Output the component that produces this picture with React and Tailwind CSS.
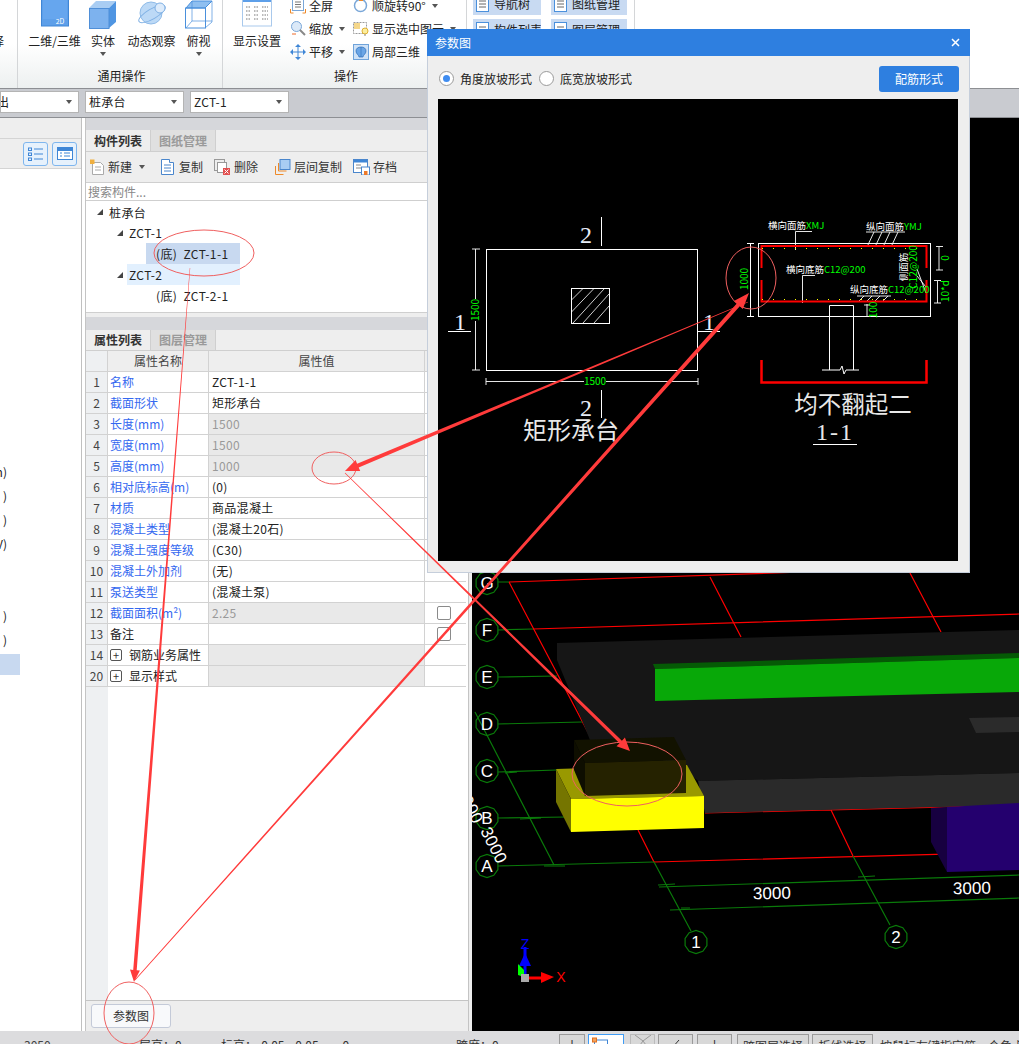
import React from 'react'

const ngon = (cx, cy, r, n = 10) =>
  Array.from({ length: n }, (_, i) => {
    const a = (Math.PI * 2 * i) / n + Math.PI / n
    return `${(cx + r * Math.cos(a)).toFixed(1)},${(cy + r * Math.sin(a)).toFixed(1)}`
  }).join(' ')

// tapered annotation arrow, w1 at the start, w2 at the tip
function Arrow({ x1, y1, x2, y2, w1, w2, head = 12, headW = 5 }) {
  const len = Math.hypot(x2 - x1, y2 - y1)
  const ux = (x2 - x1) / len
  const uy = (y2 - y1) / len
  const nx = -uy
  const ny = ux
  const bx = x2 - ux * head
  const by = y2 - uy * head
  const pts = [
    [x1 + (nx * w1) / 2, y1 + (ny * w1) / 2],
    [bx + (nx * w2) / 2, by + (ny * w2) / 2],
    [bx + nx * headW, by + ny * headW],
    [x2, y2],
    [bx - nx * headW, by - ny * headW],
    [bx - (nx * w2) / 2, by - (ny * w2) / 2],
    [x1 - (nx * w1) / 2, y1 - (ny * w1) / 2],
  ]
  return <polygon points={pts.map((p) => p.map((v) => v.toFixed(1)).join(',')).join(' ')} fill="#ff3b3b" />
}

function Caret({ className = '' }) {
  return <span className={`inline-block w-0 h-0 border-x-[3px] border-x-transparent border-t-[4px] border-t-[#555] ${className}`} />
}

function BigButton({ label, caret, children, w = 'w-[47px]' }) {
  return (
    <div className={`${w} flex flex-col items-center shrink-0`}>
      <div className="h-[30px] flex items-start justify-center">{children}</div>
      <div className="mt-[3px] text-[12px] leading-[16px] text-[#222] whitespace-nowrap">{label}</div>
      {caret && <Caret className="mt-[3px]" />}
    </div>
  )
}

function SmallButton({ icon, label, caret, w }) {
  return (
    <div className={`flex items-center h-[23px] ${w}`}>
      <div className="w-[19px] h-[18px] flex items-center shrink-0">{icon}</div>
      <span className="text-[12px] leading-[16px] text-[#222] whitespace-nowrap">{label}</span>
      {caret && <Caret className="ml-[6px]" />}
    </div>
  )
}

function NavButton({ label, icon, w }) {
  return (
    <div className={`h-[22px] ${w} bg-[#c8daf2] flex items-center pl-[3px] gap-[5px] text-[12px] text-[#222] overflow-hidden`}>
      {icon}
      <span className="whitespace-nowrap">{label}</span>
    </div>
  )
}

function NavIcon() {
  return (
    <svg width="13" height="16" viewBox="0 0 13 16" fill="#fff" stroke="#4a90dc" className="shrink-0">
      <rect x="0.5" y="0.5" width="12" height="15" />
      <path d="M3 5h7M3 8h7M3 11h7" stroke="#666" />
    </svg>
  )
}

function Ribbon() {
  return (
    <div className="h-[89px] shrink-0 flex bg-gradient-to-b from-white via-white to-[#edf0f0] border-b border-[#8d8f93] overflow-hidden">
      <div className="w-[18px] border-r border-[#d4d6d8] shrink-0 relative overflow-hidden">
        <span className="block mt-[33px] -ml-[8px] text-[12px] leading-[16px] text-[#222]">择</span>
      </div>
      {/* 通用操作 */}
      <div className="w-[205px] shrink-0 border-r border-[#d4d6d8] flex flex-col">
        <div className="h-[69px] flex pl-[13px]">
          <BigButton label="二维/三维">
            <svg width="28" height="27" viewBox="0 0 28 27">
              <rect x="0.5" y="-2" width="27" height="28" fill="#5d9fe9" stroke="#3f86d6" />
              <rect x="2" y="-1" width="24" height="20" fill="#66a6ee" />
              <text x="19" y="24" textAnchor="middle" fontSize="7" fill="#fff">2D</text>
            </svg>
          </BigButton>
          <BigButton label="实体" caret w="w-[50px]">
            <svg width="28" height="29" viewBox="0 0 28 29">
              <polygon points="0,8 7,1 27,1 20,8" fill="#a9cdf3" />
              <polygon points="20,8 27,1 27,22 20,28" fill="#4f95e2" />
              <rect x="0.5" y="8.5" width="19.5" height="20" fill="#7db2ee" stroke="#4f8fd8" />
            </svg>
          </BigButton>
          <BigButton label="动态观察" w="w-[47px]">
            <svg width="30" height="25" viewBox="0 0 30 25" className="mt-[1px]">
              <circle cx="14" cy="12" r="11" fill="#bcd9f6" stroke="#8fbbe8" />
              <ellipse cx="15" cy="13" rx="15" ry="5" fill="none" stroke="#7fb0e4" transform="rotate(-30 15 13)" />
              <circle cx="23" cy="7" r="5" fill="#dcebfb" stroke="#7fb0e4" />
            </svg>
          </BigButton>
          <BigButton label="俯视" caret w="w-[47px]">
            <svg width="28" height="29" viewBox="0 0 28 29" fill="none" stroke="#4a90dc">
              <polygon points="1,8 7,1 27,1 20,8" fill="#8fbff0" />
              <rect x="0.5" y="8" width="20" height="20" />
              <path d="M27 1V22L20 28M7 1V21H27M7 21L1 28" strokeWidth="0.7" />
            </svg>
          </BigButton>
        </div>
        <div className="text-center text-[12px] leading-[16px] text-[#222] pl-[3px] mt-[-1px]">通用操作</div>
      </div>
      {/* 操作 */}
      <div className="w-[244px] shrink-0 border-r border-[#d4d6d8] flex flex-col">
        <div className="h-[69px] flex pl-[10px]">
          <BigButton label="显示设置" w="w-[48px]">
            <svg width="30" height="27" viewBox="0 0 30 27">
              <rect x="0.5" y="-3" width="29" height="29" fill="#fff" stroke="#a9c9ec" />
              <rect x="1" y="-3" width="28" height="5" fill="#5d9fe9" />
              <path d="M4 7h5M12 7h5M20 7h6M4 11h5M12 11h5M20 11h6M4 15h5M12 15h5M20 15h6M4 19h5M12 19h5M20 19h6" stroke="#777" strokeDasharray="1.5 1" />
            </svg>
          </BigButton>
          <div className="flex flex-col -mt-[6px] ml-[9px] w-[64px]">
            <SmallButton label="全屏" icon={
              <svg width="16" height="16" viewBox="0 0 16 16" fill="none">
                <rect x="2.5" y="0.5" width="11" height="12" stroke="#7aa7d8" />
                <path d="M5 4h6M5 6.5h6M5 9h6" stroke="#777" />
                <path d="M0.5 11v4h3M15.5 11v4h-3" stroke="#ee8a2a" />
              </svg>
            } />
            <SmallButton label="缩放" caret icon={
              <svg width="16" height="17" viewBox="0 0 16 17" fill="none">
                <circle cx="6.5" cy="6.5" r="5" fill="#dbe9f8" stroke="#7aa7d8" />
                <path d="M10 10l5 5" stroke="#888" strokeWidth="2" />
                <path d="M2 14h4" stroke="#ee6a2a" />
              </svg>
            } />
            <SmallButton label="平移" caret icon={
              <svg width="16" height="16" viewBox="0 0 16 16" fill="#3f86d6">
                <path d="M8 0l3 3H5zM8 16l-3-3h6zM0 8l3-3v6zM16 8l-3 3V5z" />
                <path d="M7.5 3h1v10h-1zM3 7.5h10v1H3z" />
              </svg>
            } />
          </div>
          <div className="flex flex-col -mt-[6px] ml-[-1px]">
            <SmallButton label="顺旋转90°" caret icon={
              <svg width="15" height="15" viewBox="0 0 15 15" fill="none">
                <circle cx="7.5" cy="7.5" r="6" stroke="#7aa7d8" strokeWidth="1.5" />
                <path d="M6 0h4v3H6z" fill="#ee8a2a" />
              </svg>
            } />
            <SmallButton label="显示选中图元" caret icon={
              <svg width="16" height="16" viewBox="0 0 16 16" fill="none">
                <rect x="0.5" y="1.5" width="13" height="11" stroke="#999" strokeDasharray="2 1" />
                <rect x="1" y="2" width="6" height="6" fill="#f5d78a" />
                <circle cx="12" cy="10" r="3" fill="#fbeea0" stroke="#e0b030" />
                <path d="M11 14h2" stroke="#888" />
              </svg>
            } />
            <SmallButton label="局部三维" icon={
              <svg width="16" height="16" viewBox="0 0 16 16" fill="none">
                <rect x="0.5" y="0.5" width="15" height="15" fill="#cfe2f7" stroke="#6fa3da" />
                <path d="M8 3c3 0 5 1.5 5 4 0 3-3 4-3 6H6c0-2-3-3-3-6 0-2.500 2-4 5-4z" fill="#6aa5e6" stroke="#2f6fb8" strokeWidth="0.7" />
                <path d="M8 3v10" stroke="#2f6fb8" strokeWidth="0.6" />
              </svg>
            } />
          </div>
        </div>
        <div className="text-center text-[12px] leading-[16px] text-[#222] pl-[3px] mt-[-1px]">操作</div>
      </div>
      {/* 视图 */}
      <div className="w-[168px] shrink-0 border-r border-[#d4d6d8] flex flex-col gap-[4px] -mt-[7px] pl-[6px]">
        <div className="flex gap-[10px]">
          <NavButton label="导航树" w="w-[68px]" icon={<NavIcon />} />
          <NavButton label="图纸管理" w="w-[76px]" icon={<NavIcon />} />
        </div>
        <div className="flex gap-[10px]">
          <NavButton label="构件列表" w="w-[68px]" icon={<NavIcon />} />
          <NavButton label="图层管理" w="w-[76px]" icon={<NavIcon />} />
        </div>
      </div>
      <div className="flex-1 bg-white" />
    </div>
  )
}

function Select({ label, w, children }) {
  return (
    <div className={`${w} h-[22px] bg-white border border-[#b4b4b4] flex items-center justify-between pr-[6px] text-[12px] text-[#222] overflow-hidden`}>
      {children || <span className="pl-[3px] tracking-[0.3px]">{label}</span>}
      <Caret />
    </div>
  )
}

function Toolbar() {
  return (
    <div className="h-[29px] shrink-0 bg-[#c9cbd0] border-b border-[#8d8f93] flex items-center gap-[6px] pb-[2px]">
      <Select w="w-[79px]"><span className="-ml-[4px]">出</span></Select>
      <Select label="桩承台" w="w-[99px]" />
      <Select label="ZCT-1" w="w-[99px]" />
    </div>
  )
}

const cutTexts = ['m)', ')', ')', 'V)', '', '', ')', ')']

function LeftPanel() {
  return (
    <div className="w-[82px] shrink-0 bg-white border-r border-[#c0c0c0] flex flex-col">
      <div className="h-[21px] bg-[#eeeeee] border-b border-[#d4d4d4]" />
      <div className="h-[30px] bg-[#eeeeee] border-b border-[#d4d4d4] flex items-center justify-end gap-[4px] pr-[4px]">
        <div className="w-[25px] h-[24px] rounded-[3px] bg-[#e6f1fc] border border-[#7fb6ee] flex items-center justify-center">
          <svg width="15" height="14" viewBox="0 0 15 14" fill="none" stroke="#3f86d6">
            <rect x="0.5" y="1" width="3" height="2.5" />
            <rect x="0.5" y="6" width="3" height="2.5" />
            <rect x="0.5" y="11" width="3" height="2.5" />
            <path d="M6 2h9M6 7h9M6 12h9" />
          </svg>
        </div>
        <div className="w-[25px] h-[24px] rounded-[3px] bg-[#e6f1fc] border border-[#7fb6ee] flex items-center justify-center">
          <svg width="16" height="13" viewBox="0 0 16 13" fill="#fff" stroke="#3f86d6">
            <rect x="0.5" y="0.5" width="15" height="12" />
            <rect x="0.5" y="0.5" width="15" height="3" fill="#3f86d6" />
            <path d="M3 6h2M7 6h6M3 9h2M7 9h6" />
          </svg>
        </div>
      </div>
      <div className="mt-[291px] flex flex-col">
        {cutTexts.map((t, i) => (
          <div key={i} className="h-[24px] w-[7px] flex items-center justify-end overflow-hidden text-[12px] text-[#222] whitespace-nowrap">{t}</div>
        ))}
        <div className="h-[21px] w-[20px] bg-[#c8d9f0] mt-[2px]" />
      </div>
    </div>
  )
}

function Tab({ active, children }) {
  return (
    <div className={`h-full w-[65px] flex items-center justify-center text-[12px] border-r border-[#cfcfcf] ${active ? 'bg-[#eeeeee] text-[#333] font-bold' : 'bg-[#e0e0e0] text-[#9a9a9a] font-bold'}`}>
      {children}
    </div>
  )
}

function TreeArrow() {
  return <span className="inline-block w-0 h-0 border-l-[6px] border-l-transparent border-b-[6px] border-b-[#444]" />
}

function ToolItem({ icon, label, caret, ml }) {
  return (
    <div className={`flex items-center gap-[3px] text-[12px] text-[#333] ${ml}`}>
      {icon}
      <span className="whitespace-nowrap">{label}</span>
      {caret && <Caret className="ml-[4px]" />}
    </div>
  )
}

const rows = [
  { n: 1, name: '名称', value: 'ZCT-1-1' },
  { n: 2, name: '截面形状', value: '矩形承台' },
  { n: 3, name: '长度(mm)', value: '1500', gray: true },
  { n: 4, name: '宽度(mm)', value: '1500', gray: true },
  { n: 5, name: '高度(mm)', value: '1000', gray: true },
  { n: 6, name: '相对底标高(m)', value: '(0)' },
  { n: 7, name: '材质', value: '商品混凝土' },
  { n: 8, name: '混凝土类型', value: '(混凝土20石)' },
  { n: 9, name: '混凝土强度等级', value: '(C30)' },
  { n: 10, name: '混凝土外加剂', value: '(无)' },
  { n: 11, name: '泵送类型', value: '(混凝土泵)' },
  { n: 12, name: '截面面积(m²)', value: '2.25', gray: true, check: true },
  { n: 13, name: '备注', value: '', black: true, check: true },
  { n: 14, name: '钢筋业务属性', value: '', group: true, gray: true },
  { n: 20, name: '显示样式', value: '', group: true, gray: true },
]

function PropRow({ r }) {
  return (
    <div className="h-[21px] flex border-b border-[#d2d2d2] w-[380px] text-[12px] leading-[20px] shrink-0">
      <div className="w-[22px] bg-[#eef0f2] border-r border-[#d2d2d2] text-center text-[#444] shrink-0">{r.n}</div>
      <div className={`w-[101px] border-r border-[#d2d2d2] bg-white flex items-center shrink-0 pl-[2px] whitespace-nowrap ${r.black || r.group ? 'text-[#222]' : 'text-[#3468f0]'}`}>
        {r.group && (
          <span className="w-[12px] h-[12px] border border-[#555] rounded-[2px] mr-[7px] flex items-center justify-center text-[11px] leading-none text-[#333]">+</span>
        )}
        {r.name}
      </div>
      <div className={`w-[216px] border-r border-[#d2d2d2] pl-[3px] tracking-[0.3px] shrink-0 ${r.gray ? 'bg-[#e9e9e9] text-[#999]' : 'bg-white text-[#222]'}`}>{r.value}</div>
      <div className="flex-1 bg-white flex items-center justify-center pr-[3px]">
        {r.check && <span className="w-[14px] h-[14px] border border-[#8a8a8a] rounded-[2px] bg-white" />}
      </div>
    </div>
  )
}

function CenterPanel() {
  return (
    <div className="w-[384px] shrink-0 bg-[#eeeeee] flex flex-col ml-[3px] border-l border-[#c4c4c4] border-r">
      <div className="h-[12px] bg-[#d6d7db]" />
      <div className="h-[22px] flex border-b border-[#cfcfcf]">
        <Tab active>构件列表</Tab>
        <Tab>图纸管理</Tab>
      </div>
      <div className="h-[30px] flex items-center pl-[4px]">
        <ToolItem label="新建" caret icon={
          <svg width="15" height="17" viewBox="0 0 15 17" fill="none">
            <path d="M2.500 3.500h8l3 3v9h-11z" fill="#fff" stroke="#aaa" />
            <path d="M5 8h6M5 11h6" stroke="#aaa" />
            <rect x="0" y="0.5" width="4.5" height="4.5" fill="#f0b040" />
          </svg>
        } />
        <ToolItem ml="ml-[16px]" label="复制" icon={
          <svg width="15" height="16" viewBox="0 0 15 16" fill="#fff" stroke="#4a86cc">
            <path d="M0.5 0.5h8v3h4v12h-12z" />
            <path d="M3 6h7M3 9h7M3 12h7" />
          </svg>
        } />
        <ToolItem ml="ml-[11px]" label="删除" icon={
          <svg width="17" height="16" viewBox="0 0 17 16" fill="none">
            <rect x="0.5" y="0.5" width="10" height="11" stroke="#999" />
            <rect x="3.5" y="3.5" width="9" height="10" fill="#fff" stroke="#999" />
            <rect x="9" y="9" width="7" height="7" fill="#e25050" />
            <path d="M10.5 10.5l4 4M14.5 10.5l-4 4" stroke="#fff" />
          </svg>
        } />
        <ToolItem ml="ml-[17px]" label="层间复制" icon={
          <svg width="16" height="16" viewBox="0 0 16 16" fill="none">
            <rect x="5" y="0.5" width="10" height="10" fill="#a9cdf3" stroke="#4a86cc" />
            <path d="M3.5 4v8h8" stroke="#ee8a2a" />
            <path d="M0.5 7v8.5h8" stroke="#ee8a2a" />
          </svg>
        } />
        <ToolItem ml="ml-[11px]" label="存档" icon={
          <svg width="17" height="16" viewBox="0 0 17 16" fill="none">
            <rect x="0.5" y="0.5" width="14" height="13" fill="#fff" stroke="#4a86cc" />
            <rect x="1" y="1" width="13" height="2.5" fill="#3f86d6" />
            <path d="M3 6h5M3 9h5" stroke="#888" />
            <rect x="8.5" y="8" width="8" height="8" fill="#fff" stroke="#4a86cc" />
            <rect x="11" y="12" width="3.5" height="4" fill="#ee7a2a" />
          </svg>
        } />
      </div>
      <div className="h-[19px] bg-white border-y border-[#cfcfcf] pl-[2px] text-[12px] leading-[17px] text-[#888]">搜索构件...</div>
      <div className="h-[112px] bg-white border-b border-[#cfcfcf] text-[12px] leading-[21px] text-[#222] flex flex-col pt-[1px] tracking-[0.4px]">
        <div className="h-[20px] flex items-center pl-[11px] gap-[6px]"><TreeArrow />桩承台</div>
        <div className="h-[21px] flex items-center pl-[31px] gap-[6px]"><TreeArrow />ZCT-1</div>
        <div className="h-[21px] ml-[60px] w-[94px] bg-[#c8d9f0] pl-[10px] whitespace-pre">(底)  ZCT-1-1</div>
        <div className="h-[21px] flex items-center pl-[31px]">
          <TreeArrow />
          <div className="ml-[4px] w-[113px] h-[21px] bg-[#e2f0fe] pl-[2px]">ZCT-2</div>
        </div>
        <div className="h-[21px] ml-[60px] pl-[10px] whitespace-pre">(底)  ZCT-2-1</div>
      </div>
      <div className="h-[4px]" />
      <div className="h-[13px] bg-[#d6d7db]" />
      <div className="h-[21px] flex border-b border-[#cfcfcf]">
        <Tab active>属性列表</Tab>
        <Tab>图层管理</Tab>
      </div>
      <div className="flex-1 flex flex-col bg-white overflow-hidden border-b border-[#c4c4c4]">
        <div className="h-[21px] flex border-b border-[#d2d2d2] text-[12px] leading-[20px] text-[#444] w-[380px] bg-[#eeeeee] shrink-0">
          <div className="w-[22px] bg-[#eef0f2] border-r border-[#d2d2d2] shrink-0" />
          <div className="w-[101px] border-r border-[#d2d2d2] text-center shrink-0">属性名称</div>
          <div className="w-[216px] border-r border-[#d2d2d2] text-center shrink-0">属性值</div>
        </div>
        {rows.map((r) => <PropRow key={r.n} r={r} />)}
        <div className="flex-1 w-[22px] bg-[#eef0f2]" />
      </div>
      <div className="h-[30px] shrink-0 flex items-center pl-[5px]">
        <div className="w-[80px] h-[24px] rounded-[3px] border border-[#c4cad8] bg-[#f8f9fb] text-[12px] leading-[22px] text-center text-[#333]">参数图</div>
      </div>
    </div>
  )
}

function Scene() {
  const green = '#0a7a0a'
  const bubbles = [
    ['G', 487, 583], ['F', 487, 630], ['E', 487, 677], ['D', 487, 724],
    ['C', 487, 771], ['B', 487, 818], ['A', 487, 866], ['1', 696, 942], ['2', 896, 937],
  ]
  return (
    <svg className="w-full h-full block" viewBox="472 118 547 913">
      <rect x="472" y="118" width="547" height="913" fill="#000" />
      {/* grid behind the model */}
      <g stroke="#f00" strokeWidth="1.2" fill="none">
        <path d="M509 582L860 570M533 629L1019 614" />
        <path d="M509 582L591 738M710 577L741 637M910 573L941 632" />
        <path d="M705 813L1019 805M654 862L1019 852M638 830L654 862M831 810L853 856" />
      </g>
      <g stroke={green} strokeWidth="1.2" fill="none">
        <path d="M498 582L509 582M498 630L533 629M498 677L557 676M498 724L582 722M498 772L557 770M498 818L566 817M498 866L654 862" />
        <path d="M475 712L554 865M654 862L691 931M853 856L890 925" />
        <path d="M659 887L1019 875M670 910L1019 898" />
        <path d="M505 773L517 772M520 819L541 818M544 866L565 866M658 885L675 884M858 877L875 876M681 908L690 908" strokeWidth="1" />
      </g>
      {/* slab */}
      <polygon points="557,643 1019,630 1019,773 698,781 680,765 590,740 557,660" fill="#161616" />
      <polygon points="698,781 1019,773 1019,805 705,813" fill="#2a2a2a" />
      <polygon points="969,718 1019,717 1019,732 976,733" fill="#2b2b2b" />
      {/* green beam */}
      <polygon points="653,664 1019,653 1019,658 655,669" fill="#055a05" />
      <polygon points="655,669 1019,658 1019,692 655,701" fill="#08a808" />
      {/* purple column */}
      <polygon points="931,808 947,807 947,872 931,842" fill="#170040" />
      <polygon points="947,807 1019,803 1019,870 947,872" fill="#24006e" />
      {/* pile cap */}
      <polygon points="556,769 687,765 704,796 571,799" fill="#999900" />
      <polygon points="556,769 571,799 571,832 556,802" fill="#757500" />
      <polygon points="571,799 704,796 704,828 571,832" fill="#ffff00" />
      <polygon points="574,740 674,737 686,760 585,763" fill="#121200" />
      <polygon points="574,740 585,763 585,796 574,770" fill="#0e0e00" />
      <polygon points="585,763 686,760 686,793 585,796" fill="#252200" />
      {bubbles.map(([t, x, y]) => (
        <g key={t}>
          <polygon points={ngon(x, y, 11.5)} fill="none" stroke={green} strokeWidth="1.2" />
          <text x={x} y={y + 6} textAnchor="middle" fontSize="17" fill="#fff" className="font-['Liberation_Sans',sans-serif]">{t}</text>
        </g>
      ))}
      <g fill="#fff" fontSize="17" className="font-['Liberation_Sans',sans-serif]">
        <text x="772" y="899" textAnchor="middle" transform="rotate(-1 772 899)">3000</text>
        <text x="972" y="894" textAnchor="middle" transform="rotate(-1 972 894)">3000</text>
        <text x="494" y="851" textAnchor="middle" transform="rotate(63 494 845)">3000</text>
        <text x="470" y="811" textAnchor="middle" transform="rotate(63 470 805)">3000</text>
      </g>
      {/* axis gizmo */}
      <path d="M525 947V975" stroke="#00f" strokeWidth="3" />
      <polygon points="525,953 519,966 531,966" fill="#00f" />
      <text x="525" y="949" textAnchor="middle" fontSize="14" fill="#00f" className="font-['Liberation_Sans',sans-serif]">Z</text>
      <path d="M529 978H546" stroke="#f00" strokeWidth="3" />
      <polygon points="554,977 541,972 541,983" fill="#f00" />
      <text x="561" y="982" textAnchor="middle" fontSize="14" fill="#f00" className="font-['Liberation_Sans',sans-serif]">X</text>
      <polygon points="518,964 524,970 524,977 518,975" fill="#0f0" />
      <rect x="521" y="974" width="8" height="8" fill="#aaa" />
    </svg>
  )
}

function CadDrawing() {
  const g = '#00ff00'
  return (
    <svg className="w-[520px] h-[462px] block" viewBox="438 99 520 462">
      <rect x="438" y="99" width="520" height="462" fill="#000" />
      {/* plan */}
      <g stroke="#fff" strokeWidth="1" fill="none">
        <rect x="486.5" y="249.5" width="211" height="121" />
        <rect x="571.5" y="288.5" width="38" height="35" />
        <path d="M571.5 300l11-11M571.5 312l22-23M573 323l31-34M583 323l26-29M594 323l15-17" strokeWidth="0.8" />
        <path d="M601.5 217V246M601.5 390V418M448 331.5H471M698 331.5H720" />
        <path d="M475.5 249V370M472 249H480M472 370H480M486 381.5H698M486 378V385M698 378V385" strokeWidth="0.9" />
      </g>
      <g fill="#e8eef8" fontSize="24" className="font-['Liberation_Serif',serif]">
        <text x="586" y="243" textAnchor="middle">2</text>
        <text x="586" y="416" textAnchor="middle">2</text>
        <text x="460" y="330" textAnchor="middle">1</text>
        <text x="709" y="330" textAnchor="middle">1</text>
      </g>
      <rect x="584" y="376" width="22" height="11" fill="#000" />
      <text x="595" y="385" textAnchor="middle" fontSize="10" fill={g}>1500</text>
      <rect x="470" y="299" width="11" height="22" fill="#000" />
      <text x="475.500" y="313.500" textAnchor="middle" fontSize="10" fill={g} transform="rotate(-90 475.500 310)">1500</text>
      <text x="571" y="439" textAnchor="middle" fontSize="24" fill="#e8e8e8">矩形承台</text>

      {/* section */}
      <g stroke="#fff" strokeWidth="1" fill="none">
        <rect x="758.5" y="243.5" width="172" height="73" />
        <path d="M829.5 305.5V370M853.5 305.5V370M829.5 305.5H853.5" />
        <path d="M822 370H840L842 366L844 374L846 370H859" />
        <path d="M750.5 243V317M747 243.5H754M747 316.5H754" />
        <path d="M795.5 250V231.5H812M866 232H905M874 232l-7 15M882 232l-7 15M890 232l-7 15M898 232l-7 15" strokeWidth="0.9" />
        <path d="M802.5 303V275.5H815M857 296H891M864 296l-5 5M872 296l-5 5M880 296l-5 5M888 296l-5 5" strokeWidth="0.9" />
        <path d="M917 269L926 293M917 276L926 287" strokeWidth="0.9" />
        <path d="M939 247V270M936 246.5H943M936 270H943M937.5 281V303M934 280.500H941M934 303H941M867 304V317M864 305H870" strokeWidth="0.9" />
      </g>
      <g stroke="#f00" strokeWidth="2" fill="none">
        <path d="M761.5 268V246H926.5V268M761.5 280V301.500H926.5V280" />
        <path d="M761.5 360V382.500H926.5V360" strokeWidth="2.5" />
      </g>
      <path d="M762 248.500H926M762 299.500H926" stroke="#ff0" strokeWidth="1" strokeDasharray="1 10" fill="none" />
      <g fontSize="9.5" fill="#fff">
        <text x="768" y="229">横向面筋<tspan fill={g}>XMJ</tspan></text>
        <text x="866" y="230">纵向面筋<tspan fill={g}>YMJ</tspan></text>
        <text x="786" y="273">横向底筋<tspan fill={g}>C12@200</tspan></text>
        <text x="850" y="293">纵向底筋<tspan fill={g}>C12@200</tspan></text>
        <text x="903" y="270.500" textAnchor="middle" transform="rotate(-90 903 267)">侧面筋</text>
      </g>
      <g fontSize="10" fill={g} textAnchor="middle">
        <text x="913" y="270.500" transform="rotate(-90 913 267)">C12@200</text>
        <text x="744" y="282.500" transform="rotate(-90 744 279)">1000</text>
        <text x="873.500" y="313.500" transform="rotate(-90 873.500 310)">100</text>
        <text x="945" y="261.500" transform="rotate(-90 945 258)">0</text>
        <text x="945" y="294.500" transform="rotate(-90 945 291)">10*d</text>
      </g>
      <text x="853" y="413" textAnchor="middle" fontSize="23.500" fill="#e8e8e8">均不翻起二</text>
      <text x="835" y="440" textAnchor="middle" fontSize="24" letterSpacing="2" fill="#e8e8e8" className="font-['Liberation_Serif',serif]">1-1</text>
      <path d="M813 444.500H857" stroke="#fff" fill="none" />
    </svg>
  )
}

function Radio({ checked, label }) {
  return (
    <div className="flex items-center gap-[6px] text-[12px] text-[#222]">
      <span className="w-[15px] h-[15px] rounded-full bg-white border border-[#9a9a9a] flex items-center justify-center">
        {checked && <span className="w-[7px] h-[7px] rounded-full bg-[#3f8cf0]" />}
      </span>
      {label}
    </div>
  )
}

function Dialog() {
  return (
    <div className="absolute left-[427px] top-[29px] w-[543px] h-[544px] bg-[#eeeeee] border border-t-0 border-[#c5cedb] flex flex-col">
      <div className="h-[27px] -mx-px bg-[#2e7fe0] flex items-center justify-between pl-[8px] pr-[10px] text-[12px] text-white shrink-0">
        <span>参数图</span>
        <svg width="9" height="9" viewBox="0 0 9 9" stroke="#fff" strokeWidth="1.5"><path d="M1 1l7 7M8 1l-7 7" /></svg>
      </div>
      <div className="flex-1 px-[10px] flex flex-col">
        <div className="h-[43px] flex items-center shrink-0 pt-[2px] pl-[1px]">
          <Radio checked label="角度放坡形式" />
          <div className="w-[7px]" />
          <Radio label="底宽放坡形式" />
          <div className="ml-auto w-[80px] h-[26px] rounded-[3px] bg-[#2e7fe0] text-white text-[12px] leading-[26px] text-center">配筋形式</div>
        </div>
        <CadDrawing />
      </div>
    </div>
  )
}

function Annotations() {
  return (
    <svg className="absolute inset-0 pointer-events-none" width="1019" height="1044" viewBox="0 0 1019 1044">
      <g fill="none" stroke="#f06060" strokeWidth="1">
        <ellipse cx="204" cy="253" rx="50" ry="23" />
        <ellipse cx="334" cy="468" rx="22" ry="16" />
        <ellipse cx="751" cy="278" rx="25" ry="31" />
        <ellipse cx="627" cy="774" rx="55" ry="32" />
        <ellipse cx="129" cy="1013" rx="25" ry="31" />
      </g>
      <Arrow x1={190} y1={268} x2={134} y2={982} w1={0.4} w2={3.5} head={12} headW={5} />
      <Arrow x1={135} y1={980} x2={749} y2={293} w1={0.8} w2={4} head={16} headW={6} />
      <Arrow x1={748} y1={302} x2={345} y2={471} w1={0.4} w2={4} head={14} headW={6} />
      <Arrow x1={345} y1={473} x2={630} y2={751} w1={0.6} w2={3.5} head={13} headW={6} />
    </svg>
  )
}

function Btn({ w, children, active, dim }) {
  return (
    <div className={`${w} h-[14px] shrink-0 border border-b-0 pt-[3px] overflow-hidden text-center text-[#333] leading-[16px] ${active ? 'border-[#3f9cf5] bg-white' : dim ? 'border-[#bbbbbb] bg-[#d8d8d8]' : 'border-[#9a9a9a] bg-[#d8d8d8]'}`}>
      {children}
    </div>
  )
}

function StatusBar() {
  return (
    <div className="h-[13px] shrink-0 bg-[#dcdcde] flex overflow-hidden text-[12px] text-[#333]">
      <div className="pl-[24px] pt-[6px] leading-[16px] w-[139px] shrink-0 text-[#444]">3050</div>
      <div className="pt-[6px] leading-[16px] w-[82px] shrink-0">层高：0</div>
      <div className="pt-[6px] leading-[16px] w-[235px] shrink-0">标高：-0.05~-0.05　　0</div>
      <div className="pt-[6px] leading-[16px] w-[103px] shrink-0">跨度：0</div>
      <div className="flex pt-[3px] items-start shrink-0">
        <Btn w="w-[26px]">十</Btn>
        <div className="w-[3px] shrink-0" />
        <Btn w="w-[36px]" active>
          <svg width="18" height="10" viewBox="0 0 18 10" className="ml-[2px] -mt-[1px]" fill="none">
            <rect x="3.500" y="3" width="13" height="8" stroke="#3f86d6" />
            <rect x="1.500" y="1" width="4" height="4" fill="#f5a35a" stroke="#e07020" />
          </svg>
        </Btn>
        <div className="w-[6px] shrink-0" />
        <Btn w="w-[25px]" dim>
          <svg width="16" height="10" viewBox="0 0 16 10" className="mx-auto -mt-[3px]" stroke="#999" fill="none"><path d="M0 0l8 6 8-6M8 6l-3 4M8 6l3 4" /></svg>
        </Btn>
        <div className="w-[3px] shrink-0" />
        <Btn w="w-[35px]">
          <svg width="10" height="10" viewBox="0 0 10 10" className="mx-auto" stroke="#333" fill="none"><path d="M8 2L1 10" /></svg>
        </Btn>
        <div className="w-[4px] shrink-0" />
        <Btn w="w-[35px]">十</Btn>
        <div className="w-[5px] shrink-0" />
        <Btn w="w-[72px]">跨图层选择</Btn>
        <div className="w-[3px] shrink-0" />
        <Btn w="w-[61px]">折线选择</Btn>
        <span className="pl-[7px] pt-[4px] leading-[16px] whitespace-nowrap">按鼠标左键指定第一个角点</span>
      </div>
    </div>
  )
}

export default function App() {
  return (
    <div className="relative w-[1019px] h-[1044px] overflow-hidden bg-white flex flex-col font-['Noto_Sans_CJK_SC','Liberation_Sans',sans-serif]">
      <Ribbon />
      <Toolbar />
      <div className="flex-1 flex min-h-0 bg-white">
        <LeftPanel />
        <CenterPanel />
        <div className="w-[3px] bg-[#eeeeee] shrink-0" />
        <div className="flex-1 min-w-0 bg-black">
          <Scene />
        </div>
      </div>
      <StatusBar />
      <Dialog />
      <Annotations />
    </div>
  )
}
